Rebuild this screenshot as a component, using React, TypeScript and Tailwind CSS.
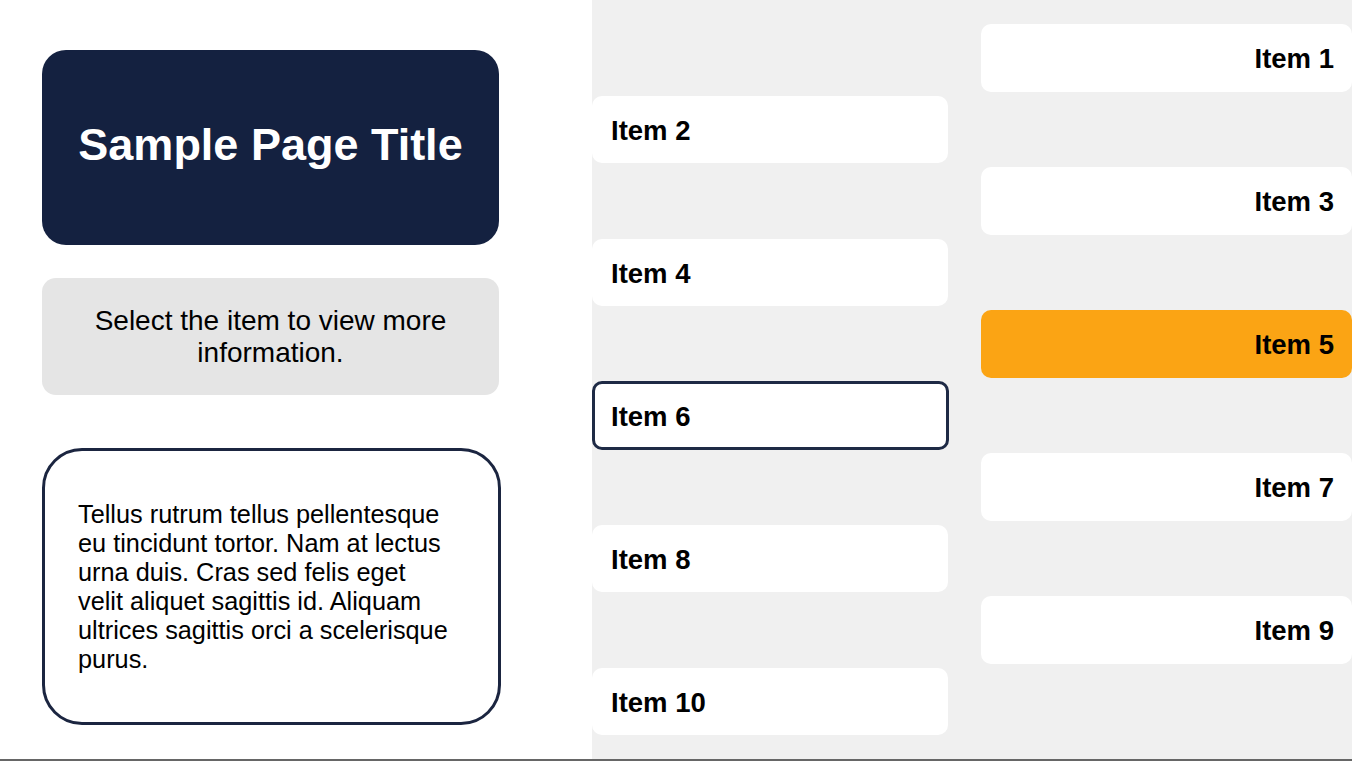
import React from "react";

const items = [
  { label: "Item 1", side: "right" },
  { label: "Item 2", side: "left" },
  { label: "Item 3", side: "right" },
  { label: "Item 4", side: "left" },
  { label: "Item 5", side: "right", active: true },
  { label: "Item 6", side: "left", focused: true },
  { label: "Item 7", side: "right" },
  { label: "Item 8", side: "left" },
  { label: "Item 9", side: "right" },
  { label: "Item 10", side: "left" },
];

export default function App() {
  return (
    <div
      className="w-[1352px] h-[761px] flex overflow-hidden border-b-2 border-[#666666] box-border"
      style={{ fontFamily: '"Liberation Sans", Arial, sans-serif' }}
    >
      <div className="w-[592px] shrink-0 bg-white pl-[42px] pt-[50px]">
        <div className="w-[457px] h-[195px] rounded-[24px] bg-[#142140] flex items-center justify-center pb-[6px]">
          <h1 className="text-white font-bold text-[45px] leading-none">Sample Page Title</h1>
        </div>
        <div className="mt-[33px] w-[457px] h-[117px] rounded-[14px] bg-[#e5e5e5] flex items-center justify-center text-center px-[20px]">
          <p className="text-black text-[28px] leading-[32px]">Select the item to view more information.</p>
        </div>
        <div className="mt-[53px] w-[459px] h-[277px] rounded-[40px] border-[3px] border-[#1b2540] bg-white flex items-center pl-[33px] pr-[48px]">
          <p className="text-black text-[25.3px] leading-[29px]">
            Tellus rutrum tellus pellentesque eu tincidunt tortor. Nam at lectus urna duis. Cras sed felis eget velit aliquet sagittis id. Aliquam ultrices sagittis orci a scelerisque purus.
          </p>
        </div>
      </div>
      <div className="flex-1 bg-[#f0f0f0] pt-[24px] flex flex-col gap-[4px]">
        {items.map((it) => (
          <div
            key={it.label}
            className={
              it.side === "right"
                ? `ml-auto w-[371px] h-[67.5px] shrink-0 rounded-[10px] flex items-center justify-end pr-[18px] pt-[2px] ${it.active ? "bg-[#fba414]" : "bg-white"}`
                : it.focused
                ? "w-[357px] h-[68.5px] -my-[0.5px] shrink-0 rounded-[10px] flex items-center pl-[16px] pt-[2px] bg-white border-[3px] border-[#1e2a45]"
                : "w-[356px] h-[67.5px] shrink-0 rounded-[10px] flex items-center pl-[19px] pt-[2px] bg-white"
            }
          >
            <span className="text-black font-bold text-[27.5px] leading-none">{it.label}</span>
          </div>
        ))}
      </div>
    </div>
  );
}
